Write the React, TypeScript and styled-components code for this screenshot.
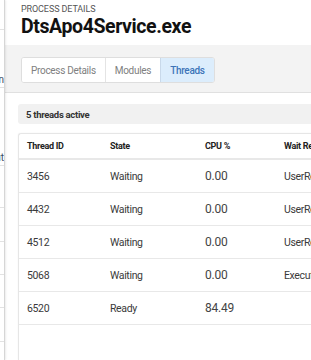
import React from 'react'
import styled, { createGlobalStyle } from 'styled-components'

const threads = [
  { id: '3456', state: 'Waiting', cpu: '0.00', wait: 'UserRequest' },
  { id: '4432', state: 'Waiting', cpu: '0.00', wait: 'UserRequest' },
  { id: '4512', state: 'Waiting', cpu: '0.00', wait: 'UserRequest' },
  { id: '5068', state: 'Waiting', cpu: '0.00', wait: 'Executive' },
  { id: '6520', state: 'Ready', cpu: '84.49', wait: '' },
]

const tabs = ['Process Details', 'Modules', 'Threads']

const sideItems = [
  { label: '', h: 30 },
  { label: 'Location', h: 58 },
  { label: 'Layout', h: 78 },
  { label: '', h: 42 },
  { label: '', h: 34 },
  { label: '', h: 33 },
  { label: '', h: 33 },
  { label: '', h: 34 },
]

export default function App() {
  return (
    <>
      <GlobalStyle />
      <SPage>
        <SSide>
          {sideItems.map((s, i) => (
            <SSideItem key={i} $h={s.h}>
              {s.label}
            </SSideItem>
          ))}
        </SSide>
        <SMain>
          <SHeader>
            <SEyebrow>PROCESS DETAILS</SEyebrow>
            <STitle>DtsApo4Service.exe</STitle>
          </SHeader>
          <STabBand>
            <STabGroup>
              {tabs.map((t) => (
                <STab key={t} $active={t === 'Threads'}>
                  {t}
                </STab>
              ))}
            </STabGroup>
          </STabBand>
          <SContent>
            <SSummary>5 threads active</SSummary>
            <SCard>
              <STable>
                <colgroup>
                  <col style={{ width: 83 }} />
                  <col style={{ width: 95 }} />
                  <col style={{ width: 79 }} />
                  <col style={{ width: 120 }} />
                </colgroup>
                <thead>
                  <tr>
                    <STh>Thread ID</STh>
                    <STh>State</STh>
                    <STh>CPU %</STh>
                    <STh>Wait Reason</STh>
                  </tr>
                </thead>
                <tbody>
                  {threads.map((t) => (
                    <tr key={t.id}>
                      <STd>{t.id}</STd>
                      <STd>{t.state}</STd>
                      <STd $num>{t.cpu}</STd>
                      <STd>{t.wait}</STd>
                    </tr>
                  ))}
                </tbody>
              </STable>
            </SCard>
          </SContent>
        </SMain>
      </SPage>
    </>
  )
}

// スタイル
const GlobalStyle = createGlobalStyle`
  html, body {
    margin: 0;
    padding: 0;
    overflow: hidden;
    background: #fff;
    font-family: Roboto, 'Liberation Sans', sans-serif;
  }
`

const SPage = styled.div`
  display: flex;
  width: 420px;
  height: 360px;
  overflow: hidden;
`

const SSide = styled.div`
  width: 4px;
  flex-shrink: 0;
  display: flex;
  flex-direction: column;
  overflow: hidden;
  border-right: 1px solid #d6d6d6;
  box-shadow: 1px 0 2px rgba(0, 0, 0, 0.08);
  background: #fff;
  z-index: 1;
`

const SSideItem = styled.div<{ $h: number }>`
  height: ${(p) => p.$h}px;
  flex-shrink: 0;
  display: flex;
  align-items: flex-end;
  justify-content: flex-end;
  padding-bottom: 2px;
  box-sizing: border-box;
  border-bottom: 1px solid #e2e2e2;
  font-size: 10px;
  color: #3a4a60;
  white-space: nowrap;
`

const SMain = styled.div`
  flex: 1;
  display: flex;
  flex-direction: column;
  background: #fff;
`

const SHeader = styled.div`
  padding: 4px 0 0 16px;
  height: 45px;
  box-sizing: border-box;
`

const SEyebrow = styled.div`
  font-size: 9px;
  letter-spacing: -0.1px;
  color: #555;
  line-height: 11px;
`

const STitle = styled.div`
  font-size: 19.5px;
  font-weight: 700;
  letter-spacing: -0.4px;
  color: #111;
  line-height: 22px;
  margin-top: 1px;
`

const STabBand = styled.div`
  height: 48px;
  box-sizing: border-box;
  background: #f3f3f3;
  border-bottom: 1px solid #e0e0e0;
  padding: 12px 0 0 16px;
`

const STabGroup = styled.div`
  display: inline-flex;
  height: 26px;
  border: 1px solid #dedede;
  border-radius: 3px;
  background: #fff;
  overflow: hidden;
  box-sizing: border-box;
`

const STab = styled.div<{ $active?: boolean }>`
  display: flex;
  align-items: center;
  padding: 0 9px;
  font-size: 10px;
  letter-spacing: -0.3px;
  color: ${(p) => (p.$active ? '#3d74b8' : '#808080')};
  font-weight: ${(p) => (p.$active ? 500 : 400)};
  background: ${(p) => (p.$active ? '#dcedfc' : '#fff')};
  border-left: 1px solid #e4e4e4;
  ${(p) => p.$active && 'border-left-color: #c9d9ea;'}

  &:first-child {
    border-left: none;
  }
`

const SContent = styled.div`
  padding: 11px 0 0 13px;
  flex: 1;
  display: flex;
  flex-direction: column;
`

const SSummary = styled.div`
  height: 20px;
  display: flex;
  align-items: center;
  padding-left: 8px;
  background: #f1f1f1;
  border-radius: 3px;
  font-size: 9.5px;
  letter-spacing: -0.3px;
  font-weight: 700;
  color: #333;
`

const SCard = styled.div`
  margin-top: 9px;
  flex: 1;
  border: 1px solid #e6e6e6;
  border-right: none;
  border-bottom: none;
  border-radius: 3px 0 0 0;
  background: #fff;
  box-shadow: 0 0 2px rgba(0, 0, 0, 0.05);
`

const STable = styled.table`
  border-collapse: collapse;
  table-layout: fixed;
  width: 377px;
`

const STh = styled.th`
  height: 24px;
  padding: 0 0 0 8px;
  text-align: left;
  font-size: 9px;
  letter-spacing: -0.3px;
  font-weight: 700;
  color: #222;
  border-bottom: 2px solid #e8e8e8;
  white-space: nowrap;
  overflow: hidden;
`

const STd = styled.td<{ $num?: boolean }>`
  height: 32px;
  padding: 0 0 0 8px;
  font-size: ${(p) => (p.$num ? '12px' : '10.5px')};
  letter-spacing: ${(p) => (p.$num ? '-0.2px' : '-0.35px')};
  color: ${(p) => (p.$num ? '#444' : '#3a3a3a')};
  border-bottom: 1px solid #e8e8e8;
  white-space: nowrap;
  overflow: hidden;
`
